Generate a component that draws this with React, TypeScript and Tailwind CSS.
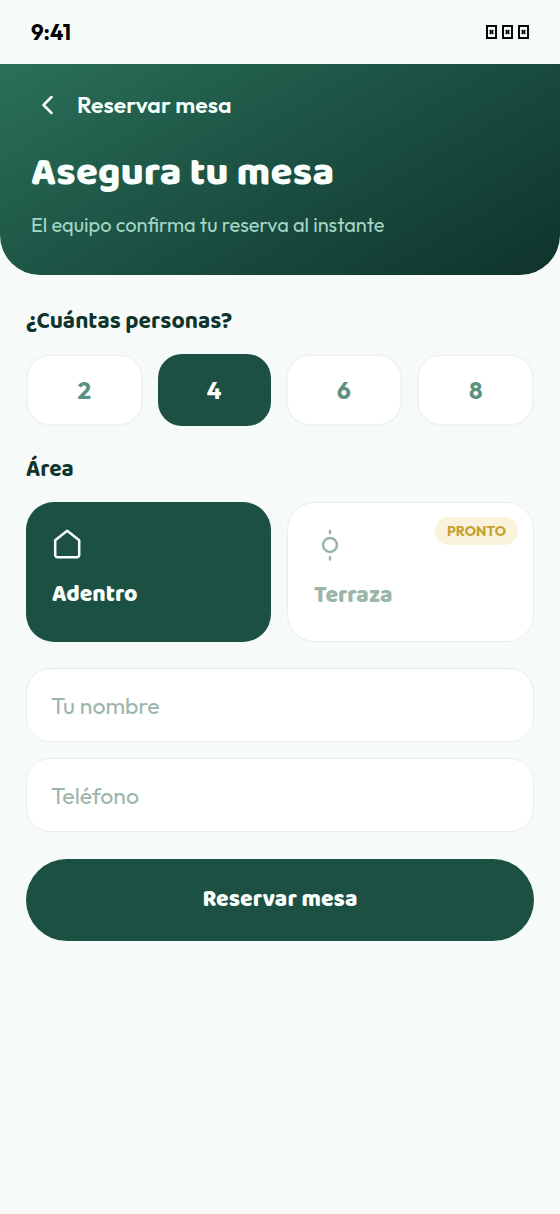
import { useState } from "react";

const display = "font-['Baloo_2','Lato',sans-serif]";

function MissingGlyph() {
  return (
    <svg width="11" height="14" viewBox="0 0 11 14" fill="none" stroke="#050706" aria-hidden="true">
      <path d="M1 1h9v12H1z" strokeWidth="2" />
      <path d="M3.700 5.200l3.600 3.600M7.300 5.200l-3.600 3.600" strokeWidth="1.700" />
    </svg>
  );
}

function StatusBar() {
  return (
    <div className="flex h-16 items-center justify-between px-[31px]">
      <span className="text-[22px] leading-7 font-bold text-black">9:41</span>
      <div className="flex gap-[5px]">
        <MissingGlyph />
        <MissingGlyph />
        <MissingGlyph />
      </div>
    </div>
  );
}

function Header() {
  return (
    <header className="rounded-b-[40px] bg-[linear-gradient(150deg,#2a7059_0%,#1b5042_50%,#0f332b_100%)] px-[31px] pt-[23px] pb-9">
      <div className="flex items-center gap-[14px]">
        <button type="button" aria-label="Volver" className="flex h-9 w-8 items-center justify-center">
          <svg width="12" height="20" viewBox="0 0 12 20" fill="none" stroke="#f4fffb" strokeWidth="2.500" strokeLinecap="round" strokeLinejoin="round">
            <path d="M10.500 2L2.500 10l8 8" />
          </svg>
        </button>
        <span className="text-[23px] leading-9 font-semibold text-[#f4fffb]">Reservar mesa</span>
      </div>
      <h1 className={`${display} mt-[26px] text-[40px] leading-12 font-extrabold text-[#f8fffd]`}>Asegura tu mesa</h1>
      <p className="mt-[14px] text-xl leading-7 text-[#a5d6c5]">El equipo confirma tu reserva al instante</p>
    </header>
  );
}

function HomeIcon() {
  return (
    <svg width="32" height="32" viewBox="0 0 32 32" fill="none" stroke="currentColor" strokeWidth="2.500" strokeLinejoin="round" aria-hidden="true">
      <path d="M3.200 12.200L15.200 2.800l12 9.400V27a2.300 2.300 0 0 1-2.300 2.300H5.500A2.300 2.300 0 0 1 3.200 27z" />
    </svg>
  );
}

function SunIcon() {
  return (
    <svg width="32" height="32" viewBox="0 0 32 32" fill="none" stroke="currentColor" strokeWidth="2.500" strokeLinecap="round" aria-hidden="true">
      <circle cx="16" cy="16" r="7" />
      <path d="M16 1.700v2.400M16 28.200v2.200" />
    </svg>
  );
}

const field =
  "h-[74px] w-full rounded-3xl border border-[#e6eeeb] bg-white px-6 text-[23px] text-[#10332b] outline-none placeholder:text-[#9bb5ab]";

export default function App() {
  const [people, setPeople] = useState(4);
  return (
    <div className="min-h-screen bg-[#f6faf8] font-['Outfit','Lato',sans-serif]">
      <StatusBar />
      <Header />
      <form className="px-[26px] pt-[33px] pb-10" onSubmit={(e) => e.preventDefault()}>
        <h2 className={`${display} text-[23px] leading-7 font-bold text-[#10332b]`}>¿Cuántas personas?</h2>
        <div className="mt-[18px] flex gap-[15px]">
          {[2, 4, 6, 8].map((n) => (
            <button
              key={n}
              type="button"
              aria-pressed={people === n}
              onClick={() => setPeople(n)}
              className={`h-[72px] flex-1 rounded-3xl pb-px text-2xl font-bold ${
                people === n ? "bg-[#1b5042] text-white" : "border-2 border-[#eff4f2] bg-white text-[#5c9080]"
              }`}
            >
              {n}
            </button>
          ))}
        </div>
        <h2 className={`${display} mt-[30px] text-[23px] leading-7 font-bold text-[#10332b]`}>Área</h2>
        <div className="mt-[18px] flex gap-4">
          <button
            type="button"
            aria-pressed="true"
            className="flex h-[140px] flex-1 flex-col items-start rounded-[28px] bg-[#1b5042] px-[26px] pt-[26px] text-[#f8fffd]"
          >
            <HomeIcon />
            <span className={`${display} mt-[21px] text-[23px] leading-7 font-extrabold`}>Adentro</span>
          </button>
          <button
            type="button"
            aria-disabled="true"
            className="relative flex h-[140px] flex-1 flex-col items-start rounded-[28px] border border-[#e6eeeb] bg-white px-[26px] pt-[26px] text-[#9bb5ab]"
          >
            <SunIcon />
            <span className={`${display} mt-[21px] text-[23px] leading-7 font-extrabold`}>Terraza</span>
            <span className="absolute top-[14px] right-[15px] rounded-full bg-[#f9f2dc] px-3 text-sm leading-7 font-bold text-[#c6a02c]">
              PRONTO
            </span>
          </button>
        </div>
        <input type="text" aria-label="Tu nombre" placeholder="Tu nombre" className={`${field} mt-[26px] block`} />
        <input type="tel" aria-label="Teléfono" placeholder="Teléfono" className={`${field} mt-4 block`} />
        <button type="submit" className={`${display} mt-[27px] block h-[82px] w-full rounded-full bg-[#1b5042] text-[23px] font-extrabold text-[#f8fffd]`}>
          Reservar mesa
        </button>
      </form>
    </div>
  );
}
